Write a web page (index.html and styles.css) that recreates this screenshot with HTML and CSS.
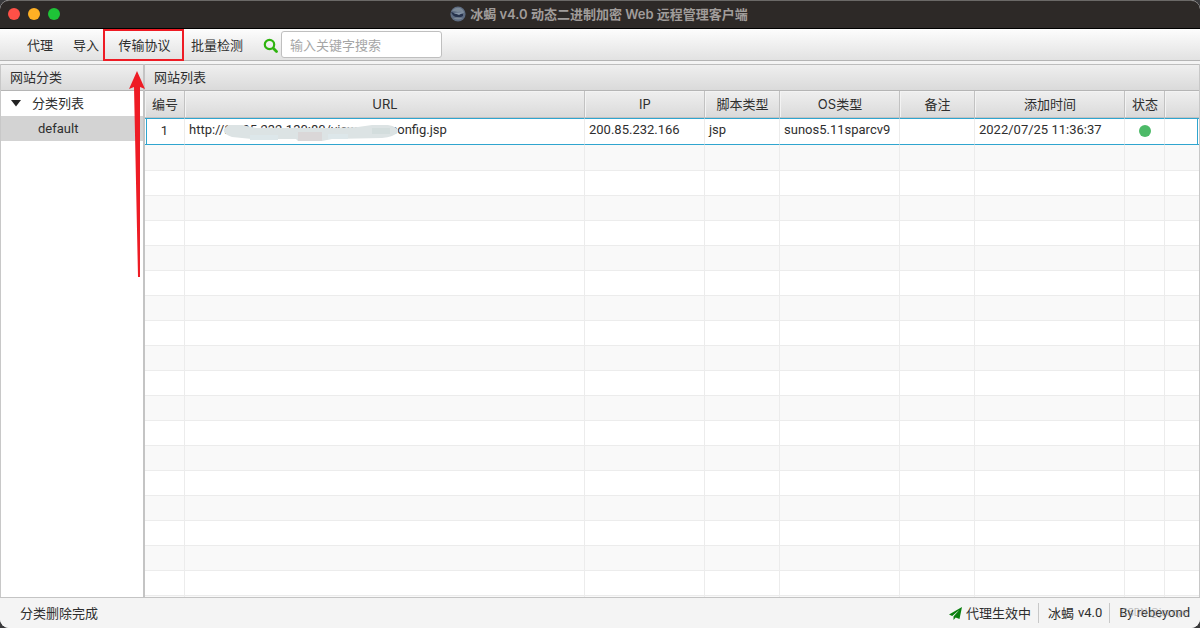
FILE: index.html
```html
<!DOCTYPE html>
<html lang="zh-CN">
<head>
<meta charset="utf-8">
<title>冰蝎 v4.0</title>
<link rel="stylesheet" href="styles.css">
</head>
<body>
<div class="window">
  <header class="titlebar">
    <div class="lights">
      <button class="light close" aria-label="关闭"></button>
      <button class="light minimize" aria-label="最小化"></button>
      <button class="light maximize" aria-label="最大化"></button>
    </div>
    <h1 class="title">
      <svg class="logo" viewBox="0 0 16 16" aria-hidden="true"><circle cx="8" cy="8" r="7.6" fill="#5d6b80"/><path d="M2 5Q5 1 10 2Q14 4 14 7Q10 5 8 6Q4 5 2 5Z" fill="#7b8998"/><path d="M1 6Q3 6 5 8L13 8L13 10Q10 12 7 11Q3 11 1 6Z" fill="#26324c"/><path d="M4 7L14 6L9 9Z" fill="#8796a8"/><path d="M3 12Q8 11 13 12Q8 15 3 12Z" fill="#7d8997"/></svg>
      <span>冰蝎 v4.0 动态二进制加密 Web 远程管理客户端</span>
    </h1>
  </header>
  <nav class="toolbar">
    <button class="tool">代理</button>
    <button class="tool">导入</button>
    <button class="tool marked">传输协议
      <svg class="arrow" viewBox="0 0 16 208" aria-hidden="true"><path d="M8 0L16 18L11 16L11 206H9L5 16L0 18Z" fill="#ee1c25"/></svg>
    </button>
    <button class="tool">批量检测</button>
    <label class="search">
      <svg class="glass" viewBox="0 0 16 16" aria-hidden="true"><circle cx="6.5" cy="7.5" r="4.7" fill="none" stroke="#2fb40f" stroke-width="2.2"/><path d="M10.300 11.300L13.500 14.500" stroke="#2fb40f" stroke-width="2.8" stroke-linecap="round"/></svg>
      <input class="field" type="text" placeholder="输入关键字搜索" aria-label="搜索">
    </label>
  </nav>
  <main class="panes">
    <section class="pane side">
      <h2 class="pane-title">网站分类</h2>
      <ul class="tree">
        <li class="node"><svg class="caret" viewBox="0 0 10 8" aria-hidden="true"><path d="M0 1H10L5 7.500Z" fill="#222"/></svg>分类列表</li>
        <li class="node leaf">default</li>
      </ul>
    </section>
    <section class="pane list">
      <h2 class="pane-title">网站列表</h2>
      <div class="scroller">
        <table class="sites">
          <colgroup><col class="c40"><col class="c400"><col class="c120"><col class="c75"><col class="c120"><col class="c75"><col class="c150"><col class="c40"><col></colgroup>
          <thead><tr><th>编号</th><th>URL</th><th>IP</th><th>脚本类型</th><th>OS类型</th><th>备注</th><th>添加时间</th><th>状态</th><th></th></tr></thead>
          <tbody>
            <tr class="selected"><td class="mid">1</td><td>http://<span class="masked">21.95.232.130:80/view<svg class="smear" viewBox="0 0 178 16" aria-hidden="true"><path d="M6 0L20 0L34 3L74 3L110 3L136 2L150 0L166 0Q177 2 176 7Q172 12 160 13L110 14L100 16H76L74 14L30 14L10 12Q0 9 2 4Z" fill="#dce3e4"/><path d="M28 10H56V15H28ZM106 9H126V14H106Z" fill="#dde7ea"/><path d="M150 3H168V9H150Z" fill="#d3dddd"/><path d="M76 7H100V16H76Z" fill="#dad7d8"/></svg></span>config.jsp</td><td>200.85.232.166</td><td>jsp</td><td>sunos5.11sparcv9</td><td></td><td>2022/07/25 11:36:37</td><td class="mid"><span class="online" role="img" aria-label="在线"></span></td><td></td></tr>
            <tr class="first"><td></td><td></td><td></td><td></td><td></td><td></td><td></td><td></td><td></td></tr>
            <tr><td></td><td></td><td></td><td></td><td></td><td></td><td></td><td></td><td></td></tr>
            <tr><td></td><td></td><td></td><td></td><td></td><td></td><td></td><td></td><td></td></tr>
            <tr><td></td><td></td><td></td><td></td><td></td><td></td><td></td><td></td><td></td></tr>
            <tr><td></td><td></td><td></td><td></td><td></td><td></td><td></td><td></td><td></td></tr>
            <tr><td></td><td></td><td></td><td></td><td></td><td></td><td></td><td></td><td></td></tr>
            <tr><td></td><td></td><td></td><td></td><td></td><td></td><td></td><td></td><td></td></tr>
            <tr><td></td><td></td><td></td><td></td><td></td><td></td><td></td><td></td><td></td></tr>
            <tr><td></td><td></td><td></td><td></td><td></td><td></td><td></td><td></td><td></td></tr>
            <tr><td></td><td></td><td></td><td></td><td></td><td></td><td></td><td></td><td></td></tr>
            <tr><td></td><td></td><td></td><td></td><td></td><td></td><td></td><td></td><td></td></tr>
            <tr><td></td><td></td><td></td><td></td><td></td><td></td><td></td><td></td><td></td></tr>
            <tr><td></td><td></td><td></td><td></td><td></td><td></td><td></td><td></td><td></td></tr>
            <tr><td></td><td></td><td></td><td></td><td></td><td></td><td></td><td></td><td></td></tr>
            <tr><td></td><td></td><td></td><td></td><td></td><td></td><td></td><td></td><td></td></tr>
            <tr><td></td><td></td><td></td><td></td><td></td><td></td><td></td><td></td><td></td></tr>
            <tr><td></td><td></td><td></td><td></td><td></td><td></td><td></td><td></td><td></td></tr>
            <tr><td></td><td></td><td></td><td></td><td></td><td></td><td></td><td></td><td></td></tr>
            <tr><td></td><td></td><td></td><td></td><td></td><td></td><td></td><td></td><td></td></tr>
          </tbody>
        </table>
      </div>
    </section>
  </main>
  <footer class="status">
    <span class="message">分类删除完成</span>
    <span class="item"><svg class="plane" viewBox="0 0 13 13" aria-hidden="true"><path d="M13 0L0 7.500L3.200 8.900L10.500 2.800L4.500 9.400V13L6.700 10.400L10.500 12Z" fill="#0a800f"/></svg>代理生效中</span>
    <span class="item">冰蝎 <span class="latin">v4.0</span></span>
    <span class="item latin">By rebeyond<span class="watermark">CSDN @jcccye</span></span>
  </footer>
</div>
</body>
</html>
```
FILE: styles.css
```css
* { box-sizing: border-box; }
body {
  margin: 0;
  background: #3a3a3c;
  color: #2e2e2e;
  font: 13px/20px Inter, "Noto Sans CJK SC", sans-serif;
}
button, input { font: inherit; color: inherit; }
.window {
  display: flex;
  flex-direction: column;
  height: 100vh;
  overflow: hidden;
  border-radius: 9px;
  background: #f4f4f4;
}
.titlebar {
  display: grid;
  grid-template-columns: 1fr auto 1fr;
  align-items: center;
  height: 29px;
  padding: 0 10px 0 8px;
  border-top: 1px solid #6b6967;
  border-bottom: 1px solid #000;
  border-radius: 9px 9px 0 0;
  background: #2d2927;
}
.lights { display: flex; gap: 8px; padding-bottom: 1px; }
.light { width: 12px; height: 12px; padding: 0; border: 0; border-radius: 50%; }
.close { background: #ff5047; }
.minimize { background: #ffb024; }
.maximize { background: #1ec337; }
.title {
  display: flex;
  align-items: center;
  gap: 4px;
  margin: 0;
  padding-bottom: 2px;
  color: #a09c9a;
  font-size: 13px;
  font-weight: 600;
  line-height: 20px;
}
.logo { width: 16px; height: 16px; }
.toolbar {
  display: flex;
  align-items: center;
  height: 32px;
  padding-left: 17px;
  border-bottom: 1px solid #b5b5b5;
  background: linear-gradient(#fdfdfd, #e2e2e2);
}
.tool { height: 32px; padding: 0 10px; border: 0; background: none; line-height: 20px; }
.tool + .tool { padding-right: 4px; }
.tool.marked {
  position: relative;
  width: 81px;
  padding: 0 0 0 2px;
  border: 2px solid #ee1c25;
}
.tool.marked + .tool { padding: 0 7px; }
.arrow {
  position: absolute;
  z-index: 2;
  top: 40px;
  left: 24px;
  width: 16px;
  height: 208px;
}
.search { display: flex; align-items: center; gap: 2px; margin-left: 13px; }
.glass { width: 16px; height: 16px; }
.field {
  width: 161px;
  height: 27px;
  padding: 0 8px;
  border: 1px solid #bfbfbf;
  border-radius: 3px;
  background: #fff;
}
.field::placeholder { color: #a6a6a6; opacity: 1; }
.panes {
  display: flex;
  flex: 1;
  min-height: 0;
  padding-top: 3px;
  border-bottom: 1px solid #c4c4c4;
}
.pane { display: flex; flex-direction: column; min-width: 0; background: #fff; }
.side { width: 145px; border-left: 1px solid #c8c8c8; border-right: 2px solid #c4c4c4; }
.list { flex: 1; border-right: 1px solid #c8c8c8; }
.pane-title {
  height: 27px;
  margin: 0;
  padding: 2px 9px;
  border-top: 1px solid #bdbdbd;
  border-bottom: 1px solid #b5b5b5;
  background: linear-gradient(#efefef, #dadada);
  font-size: 13px;
  font-weight: 400;
  line-height: 20px;
}
.tree { margin: 0; padding: 0; list-style: none; }
.node { display: flex; align-items: center; gap: 11px; height: 25px; padding: 0 0 2px 10px; }
.leaf { padding: 0 0 0 37px; background: #d3d3d3; font-family: Roboto, sans-serif; }
.caret { width: 10px; height: 8px; }
.scroller { flex: 1; min-height: 0; overflow: hidden; }
.sites { width: 100%; border-collapse: separate; border-spacing: 0; table-layout: fixed; }
.c40 { width: 40px; }
.c75 { width: 75px; }
.c120 { width: 120px; }
.c150 { width: 150px; }
.c400 { width: 400px; }
.sites th {
  height: 27px;
  padding: 0 0 0 1px;
  border-right: 1px solid #c2c2c2;
  border-bottom: 1px solid #c2c2c2;
  background: linear-gradient(#efefef, #dadada);
  box-shadow: inset 1px 1px #f3f3f3;
  font-weight: 400;
}
.sites td {
  height: 25px;
  padding: 0 4px;
  border-right: 1px solid #ececec;
  border-bottom: 1px solid #ececec;
  font-family: Roboto, sans-serif;
  white-space: nowrap;
}
.sites th:last-child, .sites td:last-child { border-right: 0; }
.sites tr:nth-child(even) td { background: #f9f9f9; }
.sites .first td { height: 26px; }
.sites .selected td {
  height: 27px;
  padding-bottom: 3px;
  border-top: 1px solid #2fa5cf;
  border-bottom-color: #2fa5cf;
}
.sites .selected td:first-child { box-shadow: inset 1px 0 #fff, inset 2px 0 #2fa5cf; }
.sites .selected td:last-child { box-shadow: inset -1px 0 #fff, inset -2px 0 #2fa5cf; }
.sites .selected .mid { padding-bottom: 2px; text-align: center; }
.masked { display: inline-block; position: relative; width: 166px; height: 20px; vertical-align: top; }
.smear { position: absolute; top: 5px; left: -2px; width: 178px; height: 16px; }
.online {
  display: inline-block;
  width: 12px;
  height: 12px;
  border-radius: 50%;
  background: #4dba68;
  vertical-align: middle;
}
.status { display: flex; align-items: center; height: 30px; padding: 0 10px 0 20px; background: #f4f4f4; }
.message { flex: 1; }
.item { position: relative; display: flex; align-items: center; gap: 4px; }
.item + .item { margin-left: 7px; padding-left: 9px; border-left: 1px solid #c8c8c8; }
.latin { font-family: Roboto, sans-serif; }
.plane { width: 13px; height: 13px; }
.watermark {
  position: absolute;
  right: 3px;
  color: #999;
  font-size: 10px;
  opacity: 0.6;
}
```
